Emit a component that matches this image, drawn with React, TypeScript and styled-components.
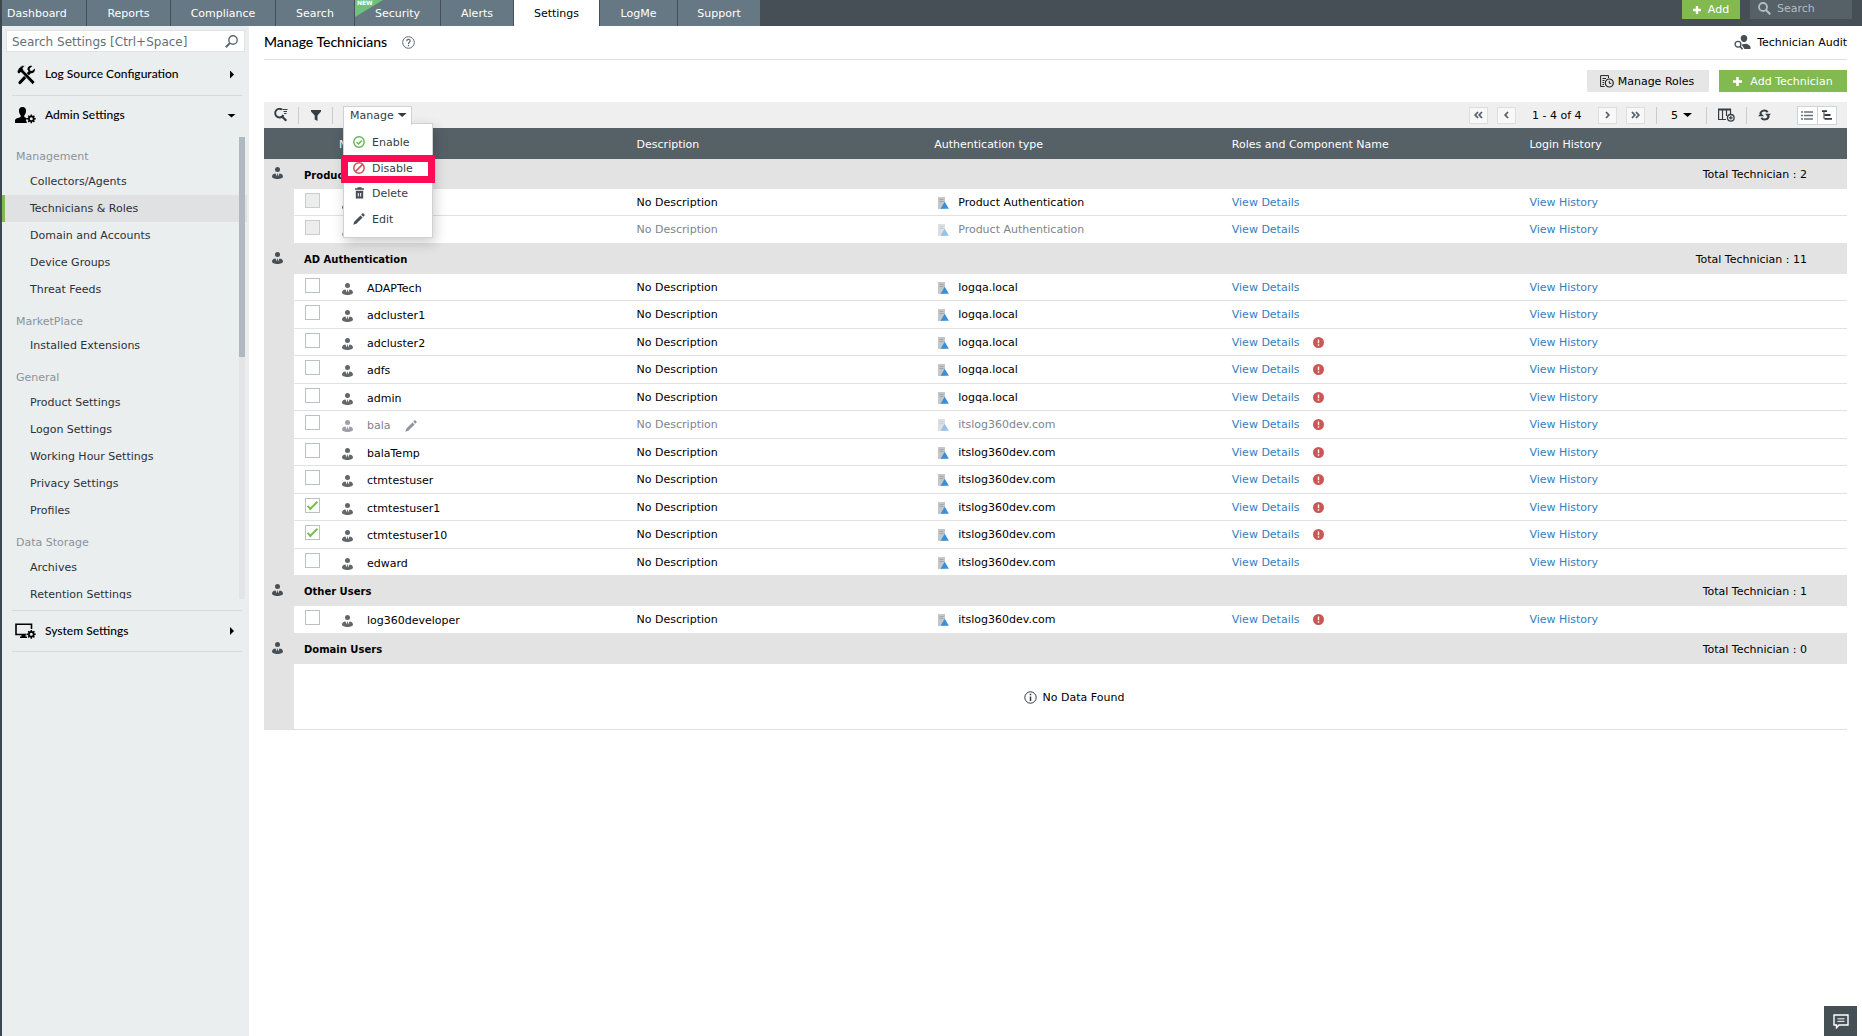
import React from "react";
import styled, { createGlobalStyle } from "styled-components";

const Global = createGlobalStyle`
  *, *::before, *::after { box-sizing: border-box; }
  body { margin: 0; background: #fff; }
  body, button, input, select { font-family: "DejaVu Sans", Verdana, sans-serif; font-size: 11px; }
  button { border: 0; background: none; padding: 0; color: inherit; cursor: pointer; }
  a { text-decoration: none; }
  svg { display: block; flex: none; }
`;

const Page = styled.div`
  min-height: 100vh;
  display: flex;
  flex-direction: column;
  border-left: 2px solid #3d4750;
  color: #000;
`;

/* ---------- top bar ---------- */

const TopBar = styled.header`
  display: flex;
  height: 26px;
  background: #454f55;
`;

const Tabs = styled.nav`
  display: flex;
`;

const Tab = styled.a<{ $active?: boolean; $width: number }>`
  position: relative;
  display: flex;
  justify-content: center;
  width: ${(p) => p.$width}px;
  padding-top: 6px;
  line-height: 16px;
  color: ${(p) => (p.$active ? "#000" : "#fff")};
  background: ${(p) => (p.$active ? "#fff" : "#667883")};
  border-right: 1px solid #454f55;
  &:first-child { justify-content: flex-start; padding-left: 5px; }
  &:last-child { border-right: 0; }
`;

const NewFlag = styled.span`
  position: absolute;
  left: 0;
  top: 0;
  width: 28px;
  height: 17px;
  padding-left: 2px;
  background: #70c27b;
  clip-path: polygon(0 0, 100% 0, 0 100%);
  font-size: 6px;
  font-weight: bold;
  line-height: 5px;
`;

const TopActions = styled.div`
  display: flex;
  align-items: flex-start;
  gap: 10px;
  margin-left: auto;
  padding-right: 10px;
`;

const GreenButton = styled.button<{ $small?: boolean }>`
  display: flex;
  align-items: center;
  justify-content: center;
  gap: ${(p) => (p.$small ? 7 : 8)}px;
  width: ${(p) => (p.$small ? 58 : 128)}px;
  height: ${(p) => (p.$small ? 19 : 22)}px;
  background: #82ba50;
  color: #fff;
`;

const TopSearch = styled.label`
  display: flex;
  align-items: center;
  gap: 6px;
  width: 102px;
  height: 19px;
  padding: 0 8px 2px;
  background: #566067;
  color: #b4bcc2;
  input {
    width: 70px;
    border: 0;
    padding: 0;
    background: none;
    outline: 0;
    color: #b4bcc2;
  }
  input::placeholder { color: #b4bcc2; opacity: 1; }
`;

/* ---------- sidebar ---------- */

const Body = styled.div`
  flex: 1;
  display: flex;
`;

const Sidebar = styled.aside`
  flex: none;
  width: 247px;
  background: #eaeeef;
`;

const SideSearch = styled.label`
  display: flex;
  align-items: center;
  justify-content: space-between;
  height: 22px;
  margin: 4px 4px 2px;
  padding: 1px 6px 0 5px;
  background: #fff;
  border: 1px solid #dfe3e4;
  color: #5d6870;
  input {
    width: 190px;
    border: 0;
    padding: 0;
    outline: 0;
    font-size: 12px;
  }
  input::placeholder { color: #667078; opacity: 1; }
`;

const Section = styled.button<{ $height: number }>`
  display: flex;
  align-items: center;
  width: 230px;
  height: ${(p) => p.$height}px;
  margin-left: 10px;
  font-family: Lato, "Open Sans", sans-serif;
  font-size: 12px;
  font-weight: 500;
  line-height: 18px;
  text-align: left;
`;

const Rule = styled.hr`
  width: 230px;
  height: 1px;
  margin: 0 0 0 10px;
  border: 0;
  background: #d5dadc;
`;

const SectionIcon = styled.span`
  width: 33px;
  padding-left: 3px;
`;

const SectionName = styled.span`
  flex: 1;
  padding-bottom: 1px;
`;

const Caret = styled.i<{ $down?: boolean }>`
  width: ${(p) => (p.$down ? 9 : 4)}px;
  height: ${(p) => (p.$down ? 4 : 8)}px;
  margin-right: ${(p) => (p.$down ? 6 : 8)}px;
  background: currentColor;
  clip-path: ${(p) => (p.$down ? "polygon(0 0, 100% 0, 50% 100%)" : "polygon(0 0, 100% 50%, 0 100%)")};
`;

const MenuArea = styled.div`
  display: flex;
  height: 462px;
  margin: 2px 0 11px;
  overflow: hidden;
`;

const MenuList = styled.div`
  flex: 1;
  padding-top: 1px;
  margin-right: -8px;
`;

const MenuLabel = styled.h3`
  height: 30px;
  margin: 0;
  padding: 11px 0 0 14px;
  font-size: 11px;
  font-weight: normal;
  line-height: 16px;
  color: #8b929b;
  &:nth-of-type(2) { height: 29px; }
`;

const MenuItem = styled.a<{ $active?: boolean }>`
  display: block;
  height: 27px;
  padding-left: ${(p) => (p.$active ? 25 : 28)}px;
  border-left: ${(p) => (p.$active ? "3px solid #82ba50" : "0")};
  background: ${(p) => (p.$active ? "#dfe1e3" : "transparent")};
  line-height: 28px;
  color: #2b3136;
`;

const Track = styled.div`
  flex: none;
  width: 6px;
  margin-right: 4px;
  background: #e2e4e6;
  z-index: 1;
`;

const Thumb = styled.div`
  height: 220px;
  background: #b0b9c0;
`;

/* ---------- main ---------- */

const Main = styled.main`
  flex: 1;
  min-width: 0;
  padding: 0 15px;
`;

const TitleRow = styled.div`
  display: flex;
  align-items: center;
  height: 34px;
  border-bottom: 1px solid #dedfe0;
`;

const Title = styled.h1`
  margin: 0 15px 0 0;
  padding-bottom: 1px;
  font-family: Lato, "Open Sans", sans-serif;
  font-size: 14px;
  font-weight: 500;
  line-height: 18px;
`;

const Audit = styled.a`
  display: flex;
  align-items: center;
  gap: 6px;
  margin-left: auto;
  color: #000;
`;

const Buttons = styled.div`
  display: flex;
  justify-content: flex-end;
  gap: 10px;
  padding: 10px 0;
`;

const GrayButton = styled.button`
  display: flex;
  align-items: center;
  justify-content: center;
  gap: 4px;
  width: 122px;
  height: 22px;
  padding-right: 2px;
  background: #e6e6e6;
`;

const Toolbar = styled.div`
  display: flex;
  align-items: center;
  height: 26px;
  background: #efefef;
  color: #353d44;
`;

const ToolButton = styled.button<{ $width: number }>`
  display: flex;
  align-items: center;
  justify-content: center;
  width: ${(p) => p.$width}px;
  height: 18px;
`;

const Divider = styled.span`
  width: 1px;
  height: 17px;
  background: #c9cbcd;
`;

const ManageWrap = styled.div`
  position: relative;
  align-self: flex-end;
  margin-left: 10px;
`;

const ManageButton = styled.button`
  position: relative;
  z-index: 3;
  display: flex;
  align-items: center;
  gap: 4px;
  width: 69px;
  height: 19px;
  margin-bottom: 3px;
  padding: 0 0 2px 6px;
  background: #fff;
  border: 1px solid #cfd2d4;
  border-bottom: 0;
  i { margin: 0; }
`;

const Dropdown = styled.ul`
  position: absolute;
  z-index: 2;
  top: 17px;
  left: 0;
  width: 90px;
  height: 115px;
  margin: 0;
  padding: 6px 0 0;
  list-style: none;
  background: #fff;
  border: 1px solid #cfd2d4;
  box-shadow: 2px 5px 12px rgba(0, 0, 0, 0.2);
`;

const DropItem = styled.li<{ $marked?: boolean }>`
  position: relative;
  height: ${(p) => (p.$marked ? 25 : 26)}px;
  &::after {
    content: "";
    display: ${(p) => (p.$marked ? "block" : "none")};
    position: absolute;
    inset: -1px -3px -2px -3px;
    border: 7px solid #ff0a54;
    pointer-events: none;
  }
  button {
    display: flex;
    align-items: center;
    gap: 7px;
    width: 100%;
    height: 24px;
    padding-left: 9px;
  }
`;

const Pager = styled.div`
  display: flex;
  align-items: center;
  margin-left: auto;
  padding-right: 10px;
`;

const PageNav = styled.div`
  display: flex;
  align-items: center;
  gap: 9px;
  margin-right: 11px;
`;

const PageButton = styled.button`
  display: grid;
  place-items: center;
  width: 19px;
  height: 17px;
  background: #f8f8f8;
  border: 1px solid #dcdedf;
`;

const PageRange = styled.span`
  width: 64px;
  padding-left: 7px;
  white-space: nowrap;
  color: #000;
`;

const PageSize = styled.button`
  display: flex;
  align-items: center;
  justify-content: center;
  gap: 5px;
  width: 49px;
  color: #000;
  i { margin: 0; }
`;

const Toggle = styled.div`
  display: flex;
  width: 40px;
  height: 19px;
  margin-left: 16px;
  border: 1px solid #cfd4d8;
  background: #fff;
  button { flex: 1; display: grid; place-items: center; }
  button + button { border-left: 1px solid #cfd4d8; }
`;

const Table = styled.table`
  width: 100%;
  table-layout: fixed;
  border-collapse: separate;
  border-spacing: 0;
  th, td { padding: 0; text-align: left; font-weight: normal; }
`;

const HeadRow = styled.tr`
  height: 31px;
  background: #566067;
  color: #fff;
  && th { padding: 2px 0 0 10px; }
`;

const GroupRow = styled.tr<{ $height: number }>`
  height: ${(p) => p.$height}px;
  background: #e3e3e3;
  color: #000;
  && th { font-size: 10px; font-weight: bold; padding: 2px 0 0 10px; }
  && td:first-child { padding: 0 0 2px 8px; }
  && td:last-child { text-align: right; padding: 1px 40px 0 0; }
`;

const DataRow = styled.tr<{ $muted?: boolean }>`
  height: 27px;
  color: ${(p) => (p.$muted ? "#7c858d" : "#000")};
  &:nth-child(odd) { height: 28px; }
  &:last-child:nth-child(odd) { height: 27px; }
  &:last-child:nth-child(n + 4) { height: 26px; }
  td { vertical-align: top; border-bottom: 1px solid #e0e1e2; }
  td:first-child { background: #e3e3e3; border-bottom: 0; }
  &:last-child td { border-bottom: 0; }
`;

const Cell = styled.div<{ $gap?: number; $indent?: number }>`
  display: flex;
  align-items: center;
  gap: ${(p) => p.$gap ?? 0}px;
  height: 27px;
  margin-bottom: -2px;
  padding-left: ${(p) => p.$indent ?? 10}px;
`;

const NameCell = styled(Cell)`
  height: 29px;
  margin-bottom: -4px;
`;

const Check = styled.input`
  appearance: none;
  display: grid;
  place-items: center;
  width: 15px;
  height: 15px;
  margin: 4px 0 0 11px;
  background: #fff;
  border: 1px solid #bcc0c2;
  &:disabled { background: #ebeeed; border-color: #ccc; }
  &:checked::before {
    content: "";
    width: 11px;
    height: 5px;
    border-left: 2px solid #78bd4e;
    border-bottom: 2px solid #78bd4e;
    transform: translateY(-1px) rotate(-45deg);
  }
`;

const Link = styled.a`
  color: #337ebf;
`;

const EmptyRow = styled.tr`
  height: 66px;
  td:first-child { background: #e3e3e3; }
  td { border-bottom: 1px solid #e0e1e2; }
`;

const Empty = styled.div`
  display: flex;
  align-items: center;
  justify-content: center;
  gap: 6px;
  padding: 1px 0 0 7px;
`;

const Chat = styled.button`
  position: fixed;
  right: 5px;
  bottom: 0;
  display: grid;
  place-items: center;
  width: 33px;
  height: 30px;
  background: #454f56;
`;

/* ---------- icons ---------- */

const Person = ({ color = "#454f55" }: { color?: string }) => (
  <svg width="11" height="12" viewBox="0 0 11 12" fill={color}>
    <circle cx="5.500" cy="2.600" r="2.500" />
    <path d="M0 9.300C.2 7.400 1.600 6.700 3.500 6.400L4.900 9.400L5.200 6.600H5.800L6.100 9.400L7.500 6.400C9.400 6.700 10.800 7.400 11 9.300C11 11.200 8.500 12 5.500 12S0 11.200 0 9.300Z" />
  </svg>
);

const Server = ({ muted }: { muted?: boolean }) => (
  <svg width="11" height="12" viewBox="0 0 11 12" opacity={muted ? 0.55 : 1}>
    <path d="M0 0H7V12H0Z" fill="#c3c7c9" />
    <path d="M1.500 2.500H5.500M1.500 4.500H5.500" stroke="#a0a6a9" />
    <path d="M6.700 4.800L10.900 11.700H2.600Z" fill="#3b8fd6" />
  </svg>
);

const Alert = () => (
  <svg width="11" height="11" viewBox="0 0 12 12">
    <circle cx="6" cy="6" r="6" fill="#cd5555" />
    <path d="M6 2.700V6.800M6 8V9.500" stroke="#fff" strokeWidth="1.500" />
  </svg>
);

const Pencil = ({ color = "#454f55" }: { color?: string }) => (
  <svg width="12" height="12" viewBox="0 0 12 12" fill={color}>
    <path d="M.3 11.700L1.200 8.700L7.500 2.400L9.600 4.500L3.300 10.800ZM8.200 1.700L9.300 .6C9.700 .2 10.100 .2 10.500 .6L11.400 1.500C11.800 1.900 11.800 2.300 11.400 2.700L10.300 3.800Z" />
  </svg>
);

const Plus = ({ size = 9 }: { size?: number }) => (
  <svg width={size} height={size} viewBox="0 0 9 9">
    <path d="M4.500 0V9M0 4.500H9" stroke="#fff" strokeWidth="2.600" />
  </svg>
);

const Magnifier = ({ size = 13, flip }: { size?: number; flip?: boolean }) => (
  <svg width={size} height={size} viewBox="0 0 13 13" fill="none" stroke="currentColor">
    {flip ? (
      <>
        <circle cx="8" cy="5" r="4.200" strokeWidth="1.400" />
        <path d="M5 8L.8 12.200" strokeWidth="2" />
      </>
    ) : (
      <>
        <circle cx="5" cy="5" r="4" strokeWidth="1.800" />
        <path d="M8 8L12.300 12.300" strokeWidth="2.200" />
      </>
    )}
  </svg>
);

const FindIcon = () => (
  <svg width="14" height="14" viewBox="0 0 14 14" fill="none" stroke="#353d44">
    <path d="M8 1.600A4.300 4.300 0 1 0 9.400 7" strokeWidth="1.900" />
    <path d="M8 8.500L12.300 12.800" strokeWidth="2.200" />
    <path d="M8.500 1.500H13.500M9.500 3.500H13M10 5.500H12.500" />
  </svg>
);

const Funnel = () => (
  <svg width="10" height="11" viewBox="0 0 10 11" fill="#353d44">
    <path d="M0 0H10V1.500L6.500 5.500V11L3.700 9.500V5.500L0 1.500Z" />
  </svg>
);

const Help = () => (
  <svg width="13" height="13" viewBox="0 0 13 13" fill="none" stroke="#5d6a75">
    <circle cx="6.500" cy="6.500" r="5.800" />
    <path d="M4.700 5.200C4.700 2.800 8.300 2.900 8.200 5C8.100 6.300 6.500 6.200 6.500 7.900M6.500 8.800V10.200" strokeWidth="1.200" />
  </svg>
);

const Info = () => (
  <svg width="13" height="13" viewBox="0 0 13 13" fill="none" stroke="#30383e">
    <circle cx="6.500" cy="6.500" r="5.700" />
    <path d="M6.500 2.800V4.200M6.500 5.500V10" strokeWidth="1.500" />
  </svg>
);

const gear = (x: number, y: number) => (
  <g transform={`translate(${x} ${y})`}>
    <circle r="2.400" fill="none" stroke="#000" strokeWidth="1.700" />
    <path
      d="M0 -4.400V-2.700M0 2.700V4.400M-4.400 0H-2.700M2.700 0H4.400M-3.100 -3.100L-2 -2M2 2L3.100 3.100M-3.100 3.100L-2 2M2 -2L3.100 -3.100"
      stroke="#000"
      strokeWidth="1.500"
    />
  </g>
);

const Tools = () => (
  <svg width="22" height="20" viewBox="0 0 22 20">
    <path d="M5 17.500L14.500 7.500" stroke="#000" strokeWidth="3.200" strokeLinecap="round" />
    <path d="M19.800 3.400L17 6L15 5.500L14.600 3.500L17.300 .9C14.500 .2 12 2.200 12.600 5L15.500 8.300C18.500 8.700 20.400 6.200 19.800 3.400Z" />
    <path d="M2 7L3.500 3.500L7 .6L10 .8L7.800 2.900L8.600 5.300L20 17L17.600 19.500L6.300 7.600L5.400 7.400L3.900 9Z" stroke="#eaeeef" strokeWidth=".7" />
  </svg>
);

const AdminIcon = () => (
  <svg width="21" height="17" viewBox="0 0 21 17">
    <path d="M7.500 0C10 0 11.300 1.800 11 4.200C10.800 6.200 10 7.800 9.300 8.500V10L12 11.200L11 13.500L12 16H0V13C.5 11.500 3 11 5.700 10V8.500C5 7.700 4.200 6.200 4 4.200C3.700 1.800 5 0 7.500 0Z" />
    {gear(16.3, 11.8)}
  </svg>
);

const SystemIcon = () => (
  <svg width="21" height="16" viewBox="0 0 21 16">
    <path d="M11.500 11.500H1V1.200H16.500V6" fill="none" stroke="#000" strokeWidth="1.600" />
    <path d="M6.500 12H10.500V13.500H12V15H5V13.500H6.500Z" />
    {gear(16.3, 11.3)}
  </svg>
);

const AuditIcon = () => (
  <svg width="17" height="15" viewBox="0 0 17 15" fill="#454f55">
    <path d="M10 0C12.200 0 13.500 1.600 13.300 3.600C13.100 5.500 12 7.200 10 7.200S6.900 5.500 6.700 3.600C6.500 1.600 7.800 0 10 0ZM7.500 9.500L12 8.800C14.500 9.500 16 10.500 16.500 12V14H10.500Z" />
    <circle cx="4" cy="9.200" r="2.900" fill="none" stroke="#454f55" strokeWidth="1.300" />
    <path d="M6 11.300L8.500 14.300" stroke="#454f55" strokeWidth="1.600" />
  </svg>
);

const RolesIcon = () => (
  <svg width="14" height="13" viewBox="0 0 14 13" fill="none" stroke="#222">
    <path d="M4.500 11.500H.6V.6H8.500V3M2.500 3.500H6M2.500 5.500H4.500M2.500 7.500H4M2.500 9.500H4" />
    <circle cx="9.300" cy="8" r="4" strokeWidth="1.200" />
    <path d="M9.300 5.800V8.300H11.300" />
  </svg>
);

const EnableIcon = () => (
  <svg width="12" height="12" viewBox="0 0 12 12" fill="none" stroke="#62b54f" strokeWidth="1.400">
    <circle cx="6" cy="6" r="5.200" />
    <path d="M3.400 5.900L5.500 8L8.700 4.500" />
  </svg>
);

const DisableIcon = () => (
  <svg width="12" height="12" viewBox="0 0 12 12" fill="none" stroke="#cb5358" strokeWidth="1.500">
    <circle cx="6" cy="6" r="5.200" />
    <path d="M2.400 9.600L9.600 2.400" />
  </svg>
);

const TrashIcon = () => (
  <svg width="12" height="12" viewBox="0 0 12 12">
    <path d="M4.500 .2H8.500V1.200H11V2.700H2V1.200H4.500ZM2.800 3.800H10.200V11.500H2.800Z" fill="#454f55" />
    <path d="M5.300 6V9.500M7.700 6V9.500" stroke="#fff" />
  </svg>
);

const Chevron = ({ left, double }: { left?: boolean; double?: boolean }) => (
  <svg width="9" height="8" viewBox="0 0 9 8" fill="none" stroke="#56606a" strokeWidth="1.800">
    {double
      ? <path d={left ? "M4 1L1.200 4L4 7M8 1L5.200 4L8 7" : "M1 1L3.800 4L1 7M5 1L7.800 4L5 7"} />
      : <path d={left ? "M6 1L3.200 4L6 7" : "M3 1L5.800 4L3 7"} />}
  </svg>
);

const ColumnsIcon = () => (
  <svg width="17" height="14" viewBox="0 0 17 14" fill="none" stroke="#353d44">
    <path d="M0 1.500H13" strokeWidth="2" />
    <path d="M.6 1V11.500H8M4.500 1V11.500M8.500 1V8M12.500 1V6" strokeWidth="1.200" />
    <circle cx="12.800" cy="9.800" r="3.300" strokeWidth="1.300" />
    <path d="M12.800 8V11.600M11 9.800H14.600" strokeWidth="1.200" />
  </svg>
);

const RefreshIcon = () => (
  <svg width="13" height="12" viewBox="0 0 13 12" fill="none" stroke="#353d44" strokeWidth="2">
    <path d="M2.200 5C2.800 1.200 8 .4 9.600 3.200M10.800 7C10.200 10.800 5 11.600 3.400 8.800" />
    <path d="M7 4.700H13L10 8ZM0 7.300L3 4L6 7.300Z" fill="#353d44" stroke="none" />
  </svg>
);

const ListIcon = () => (
  <svg width="12" height="9" viewBox="0 0 12 9" stroke="#66717a">
    <path d="M0 1H2M0 4.500H2M0 8H2M3 1H12M3 4.500H12M3 8H12" strokeWidth="1.400" />
  </svg>
);

const TreeIcon = () => (
  <svg width="10" height="10" viewBox="0 0 10 10" stroke="#353d44" fill="none">
    <path d="M0 1.200H5M3 5H8.500M3 8.800H10" strokeWidth="1.800" />
    <path d="M2 1V8.800H4M2 5H4" />
  </svg>
);

const ChatIcon = () => (
  <svg width="16" height="15" viewBox="0 0 16 15" fill="none" stroke="#fff">
    <path d="M1 1H15V11H6L3.500 13.700V11H1Z" strokeWidth="1.400" />
    <path d="M4.500 4.800H11.500M4.500 7.300H11.500" />
  </svg>
);

/* ---------- data ---------- */

const tabs = [
  { name: "Dashboard", width: 85 },
  { name: "Reports", width: 84 },
  { name: "Compliance", width: 105 },
  { name: "Search", width: 79 },
  { name: "Security", width: 86, fresh: true },
  { name: "Alerts", width: 73 },
  { name: "Settings", width: 86, active: true },
  { name: "LogMe", width: 78 },
  { name: "Support", width: 82 },
];

const menu = [
  { label: "Management", items: ["Collectors/Agents", "Technicians & Roles", "Domain and Accounts", "Device Groups", "Threat Feeds"] },
  { label: "MarketPlace", items: ["Installed Extensions"] },
  { label: "General", items: ["Product Settings", "Logon Settings", "Working Hour Settings", "Privacy Settings", "Profiles"] },
  { label: "Data Storage", items: ["Archives", "Retention Settings"] },
];

type User = { name: string; auth: string; alert?: boolean; muted?: boolean; locked?: boolean; checked?: boolean; edit?: boolean };
type Group = { title: string; total: number; users: User[] };

const dev = "itslog360dev.com";
const qa = "logqa.local";
const groups: Group[] = [
  {
    title: "Product Users",
    total: 2,
    users: [
      { name: "admin", auth: "Product Authentication", locked: true },
      { name: "guest", auth: "Product Authentication", locked: true, muted: true },
    ],
  },
  {
    title: "AD Authentication",
    total: 11,
    users: [
      { name: "ADAPTech", auth: qa },
      { name: "adcluster1", auth: qa },
      { name: "adcluster2", auth: qa, alert: true },
      { name: "adfs", auth: qa, alert: true },
      { name: "admin", auth: qa, alert: true },
      { name: "bala", auth: dev, alert: true, muted: true, edit: true },
      { name: "balaTemp", auth: dev, alert: true },
      { name: "ctmtestuser", auth: dev, alert: true },
      { name: "ctmtestuser1", auth: dev, alert: true, checked: true },
      { name: "ctmtestuser10", auth: dev, alert: true, checked: true },
      { name: "edward", auth: dev },
    ],
  },
  { title: "Other Users", total: 1, users: [{ name: "log360developer", auth: dev, alert: true }] },
  { title: "Domain Users", total: 0, users: [] },
];

const actions = [
  { name: "Enable", icon: <EnableIcon /> },
  { name: "Disable", icon: <DisableIcon />, marked: true },
  { name: "Delete", icon: <TrashIcon /> },
  { name: "Edit", icon: <Pencil /> },
];

/* ---------- parts ---------- */

function UserRow({ user }: { user: User }) {
  return (
    <DataRow $muted={user.muted}>
      <td />
      <td>
        <Check type="checkbox" aria-label={`Select ${user.name}`} defaultChecked={user.checked} disabled={user.locked} />
      </td>
      <td>
        <NameCell $gap={14} $indent={13}>
          <Person color={user.muted ? "#9d9faa" : "#63676a"} />
          {user.name}
          {user.edit && <Pencil color="#8f959c" />}
        </NameCell>
      </td>
      <td><Cell>No Description</Cell></td>
      <td>
        <Cell $gap={9} $indent={14}>
          <Server muted={user.muted} />
          {user.auth}
        </Cell>
      </td>
      <td>
        <Cell $gap={13}>
          <Link href="#details">View Details</Link>
          {user.alert && <Alert />}
        </Cell>
      </td>
      <td><Cell><Link href="#history">View History</Link></Cell></td>
    </DataRow>
  );
}

function SideNav() {
  return (
    <Sidebar>
      <SideSearch>
        <input aria-label="Search settings" placeholder="Search Settings [Ctrl+Space]" />
        <Magnifier flip />
      </SideSearch>
      <Section $height={41}>
        <SectionIcon><Tools /></SectionIcon>
        <SectionName>Log Source Configuration</SectionName>
        <Caret />
      </Section>
      <Rule />
      <Section $height={39}>
        <SectionIcon><AdminIcon /></SectionIcon>
        <SectionName>Admin Settings</SectionName>
        <Caret $down />
      </Section>
      <MenuArea>
        <MenuList>
          {menu.map((g) => (
            <React.Fragment key={g.label}>
              <MenuLabel>{g.label}</MenuLabel>
              {g.items.map((item) => (
                <MenuItem key={item} href="#menu" $active={item === "Technicians & Roles"}>{item}</MenuItem>
              ))}
            </React.Fragment>
          ))}
        </MenuList>
        <Track><Thumb /></Track>
      </MenuArea>
      <Rule />
      <Section $height={40}>
        <SectionIcon><SystemIcon /></SectionIcon>
        <SectionName>System Settings</SectionName>
        <Caret />
      </Section>
      <Rule />
    </Sidebar>
  );
}

export default function App() {
  return (
    <Page>
      <Global />
      <TopBar>
        <Tabs>
          {tabs.map((t) => (
            <Tab key={t.name} href="#tab" $width={t.width} $active={t.active}>
              {t.fresh && <NewFlag>NEW</NewFlag>}
              {t.name}
            </Tab>
          ))}
        </Tabs>
        <TopActions>
          <GreenButton $small><Plus size={8} />Add</GreenButton>
          <TopSearch>
            <Magnifier />
            <input aria-label="Search" placeholder="Search" />
          </TopSearch>
        </TopActions>
      </TopBar>
      <Body>
        <SideNav />
        <Main>
          <TitleRow>
            <Title>Manage Technicians</Title>
            <Help />
            <Audit href="#audit"><AuditIcon />Technician Audit</Audit>
          </TitleRow>
          <Buttons>
            <GrayButton><RolesIcon />Manage Roles</GrayButton>
            <GreenButton><Plus />Add Technician</GreenButton>
          </Buttons>
          <Toolbar>
            <ToolButton $width={34} aria-label="Find"><FindIcon /></ToolButton>
            <Divider />
            <ToolButton $width={33} aria-label="Filter"><Funnel /></ToolButton>
            <Divider />
            <ManageWrap>
              <ManageButton>Manage<Caret $down /></ManageButton>
              <Dropdown>
                {actions.map((a) => (
                  <DropItem key={a.name} $marked={a.marked}>
                    <button>{a.icon}{a.name}</button>
                  </DropItem>
                ))}
              </Dropdown>
            </ManageWrap>
            <Pager>
              <PageNav>
                <PageButton aria-label="First page"><Chevron left double /></PageButton>
                <PageButton aria-label="Previous page"><Chevron left /></PageButton>
                <PageRange>1 - 4 of 4</PageRange>
                <PageButton aria-label="Next page"><Chevron /></PageButton>
                <PageButton aria-label="Last page"><Chevron double /></PageButton>
              </PageNav>
              <Divider />
              <PageSize>5<Caret $down /></PageSize>
              <Divider />
              <ToolButton $width={39} aria-label="Columns"><ColumnsIcon /></ToolButton>
              <Divider />
              <ToolButton $width={34} aria-label="Refresh"><RefreshIcon /></ToolButton>
              <Toggle>
                <button aria-label="List view"><ListIcon /></button>
                <button aria-label="Tree view"><TreeIcon /></button>
              </Toggle>
            </Pager>
          </Toolbar>
          <Table>
            <colgroup>
              <col style={{ width: 30 }} />
              <col style={{ width: 35 }} />
              <col style={{ width: "18.8%" }} />
              <col style={{ width: "18.8%" }} />
              <col style={{ width: "18.8%" }} />
              <col style={{ width: "18.8%" }} />
              <col />
            </colgroup>
            <thead>
              <HeadRow>
                <th colSpan={2} />
                <th>Name</th>
                <th>Description</th>
                <th>Authentication type</th>
                <th>Roles and Component Name</th>
                <th>Login History</th>
              </HeadRow>
            </thead>
            {groups.map((g, i) => (
              <tbody key={g.title}>
                <GroupRow $height={i === 0 ? 30 : 31}>
                  <td><Person /></td>
                  <th colSpan={5}>{g.title}</th>
                  <td>Total Technician : {g.total}</td>
                </GroupRow>
                {g.users.map((u) => <UserRow key={u.name} user={u} />)}
                {g.users.length === 0 && (
                  <EmptyRow>
                    <td />
                    <td colSpan={6}><Empty><Info />No Data Found</Empty></td>
                  </EmptyRow>
                )}
              </tbody>
            ))}
          </Table>
        </Main>
      </Body>
      <Chat aria-label="Chat"><ChatIcon /></Chat>
    </Page>
  );
}
